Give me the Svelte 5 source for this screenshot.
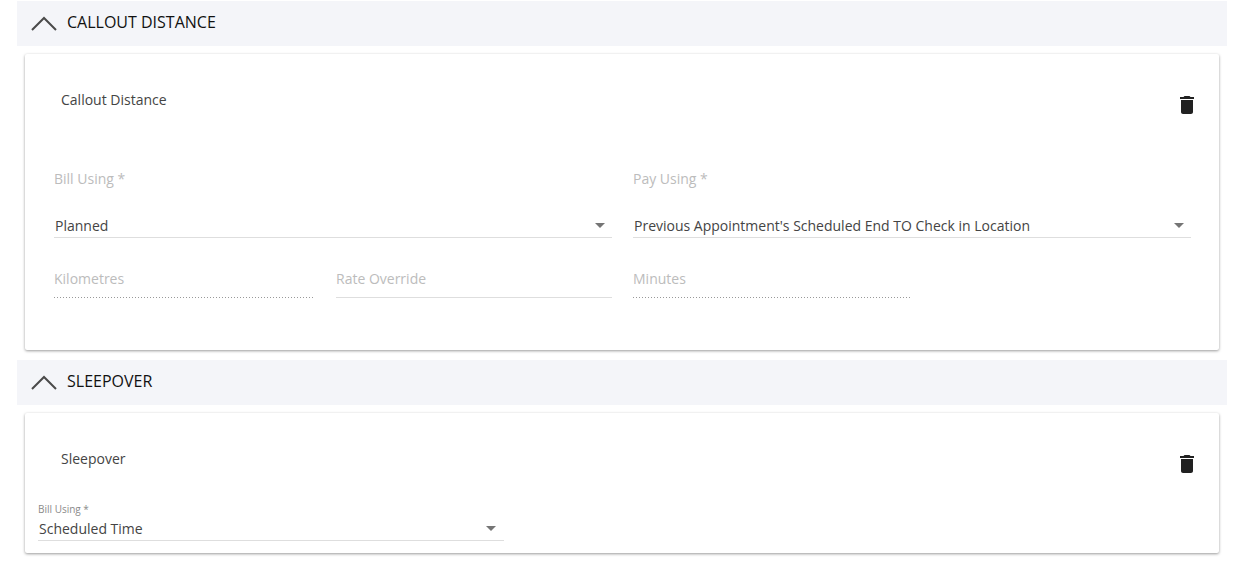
<script>
  const trash = "M6 19c0 1.1.9 2 2 2h8c1.1 0 2-.9 2-2V7H6v12zM19 4h-3.5l-1-1h-5l-1 1H5v2h14V4z";
</script>

<div class="page">
  <section>
    <header class="bar">
      <svg class="chev" viewBox="0 0 26 16" width="26" height="16"><path d="M1 15 13 3l12 12" /></svg>
      <h2>CALLOUT DISTANCE</h2>
    </header>
    <div class="card first">
      <div class="card-head">
        <span class="name">Callout Distance</span>
        <svg class="trash" viewBox="0 0 24 24" width="24" height="24"><path d={trash} /></svg>
      </div>
      <div class="row two">
        <div class="field">
          <div class="label">Bill Using *</div>
          <div class="select"><span>Planned</span><i class="caret"></i></div>
        </div>
        <div class="field">
          <div class="label">Pay Using *</div>
          <div class="select"><span>Previous Appointment's Scheduled End TO Check in Location</span><i class="caret"></i></div>
        </div>
      </div>
      <div class="row three">
        <div class="input dotted">Kilometres</div>
        <div class="input solid">Rate Override</div>
        <div class="input dotted">Minutes</div>
      </div>
    </div>
  </section>

  <section>
    <header class="bar">
      <svg class="chev" viewBox="0 0 26 16" width="26" height="16"><path d="M1 15 13 3l12 12" /></svg>
      <h2>SLEEPOVER</h2>
    </header>
    <div class="card second">
      <div class="card-head">
        <span class="name">Sleepover</span>
        <svg class="trash" viewBox="0 0 24 24" width="24" height="24"><path d={trash} /></svg>
      </div>
      <div class="small-field">
        <div class="small-label">Bill Using *</div>
        <div class="select small"><span>Scheduled Time</span><i class="caret"></i></div>
      </div>
    </div>
  </section>
</div>

<style>
  :global(body) {
    margin: 0;
    background: #fff;
    font-family: "Open Sans", "Liberation Sans", sans-serif;
  }
  .page {
    padding: 1px 19px 0 17px;
  }
  section {
    margin-bottom: 10px;
  }
  .bar {
    display: flex;
    align-items: center;
    gap: 10px;
    height: 45px;
    padding-left: 14px;
    background: #f4f5f9;
  }
  .chev {
    margin-top: -1px;
  }
  .chev path {
    fill: none;
    stroke: #4a4a4a;
    stroke-width: 2;
  }
  h2 {
    margin: -4px 0 0;
    font-size: 16px;
    font-weight: 400;
    color: #111;
  }
  .card {
    margin: 8px 8px 0;
    background: #fff;
    border-radius: 2px;
    box-shadow: 0 1px 3px rgba(0, 0, 0, 0.4);
  }
  .first {
    height: 296px;
  }
  .second {
    height: 140px;
  }
  .card-head {
    display: flex;
    justify-content: space-between;
    padding: 36px 20px 0 36px;
    height: 52px;
  }
  .name {
    font-size: 14px;
    line-height: 19px;
    color: #444;
  }
  .trash {
    margin-top: 3px;
  }
  .trash path {
    fill: #212121;
  }
  .row {
    display: flex;
    padding: 0 28px 0 29px;
  }
  .two {
    gap: 21px;
    margin-top: 27px;
  }
  .field {
    flex: 1;
  }
  .label {
    font-size: 14px;
    line-height: 19px;
    color: #bcbcbc;
  }
  .select {
    display: flex;
    justify-content: space-between;
    align-items: center;
    margin-top: 26px;
    height: 23px;
    padding: 0 7px 0 1px;
    border-bottom: 1px solid #dedede;
    font-size: 14px;
    color: #444;
  }
  .caret {
    width: 0;
    height: 0;
    border-left: 5px solid transparent;
    border-right: 5px solid transparent;
    border-top: 5px solid #757575;
  }
  .three {
    margin-top: 31px;
  }
  .input {
    height: 29px;
    line-height: 19px;
    font-size: 14px;
    color: #bcbcbc;
    box-sizing: border-box;
  }
  .input:nth-child(1) {
    width: 260px;
    margin-right: 22px;
  }
  .input:nth-child(2) {
    width: 276px;
    margin-right: 21px;
  }
  .input:nth-child(3) {
    width: 277px;
  }
  .dotted {
    background: repeating-linear-gradient(to right, #999 0 1px, transparent 1px 3px) left bottom / 100% 1px no-repeat;
  }
  .solid {
    border-bottom: 1px solid #dedede;
  }
  .small-field {
    width: 466px;
    margin-left: 13px;
    padding-top: 1px;
  }
  .small-label {
    font-size: 10px;
    line-height: 14px;
    color: #8a8a8a;
  }
  .select.small {
    margin-top: 0;
    padding: 0 8px 0 1px;
    height: 24px;
  }
</style>
